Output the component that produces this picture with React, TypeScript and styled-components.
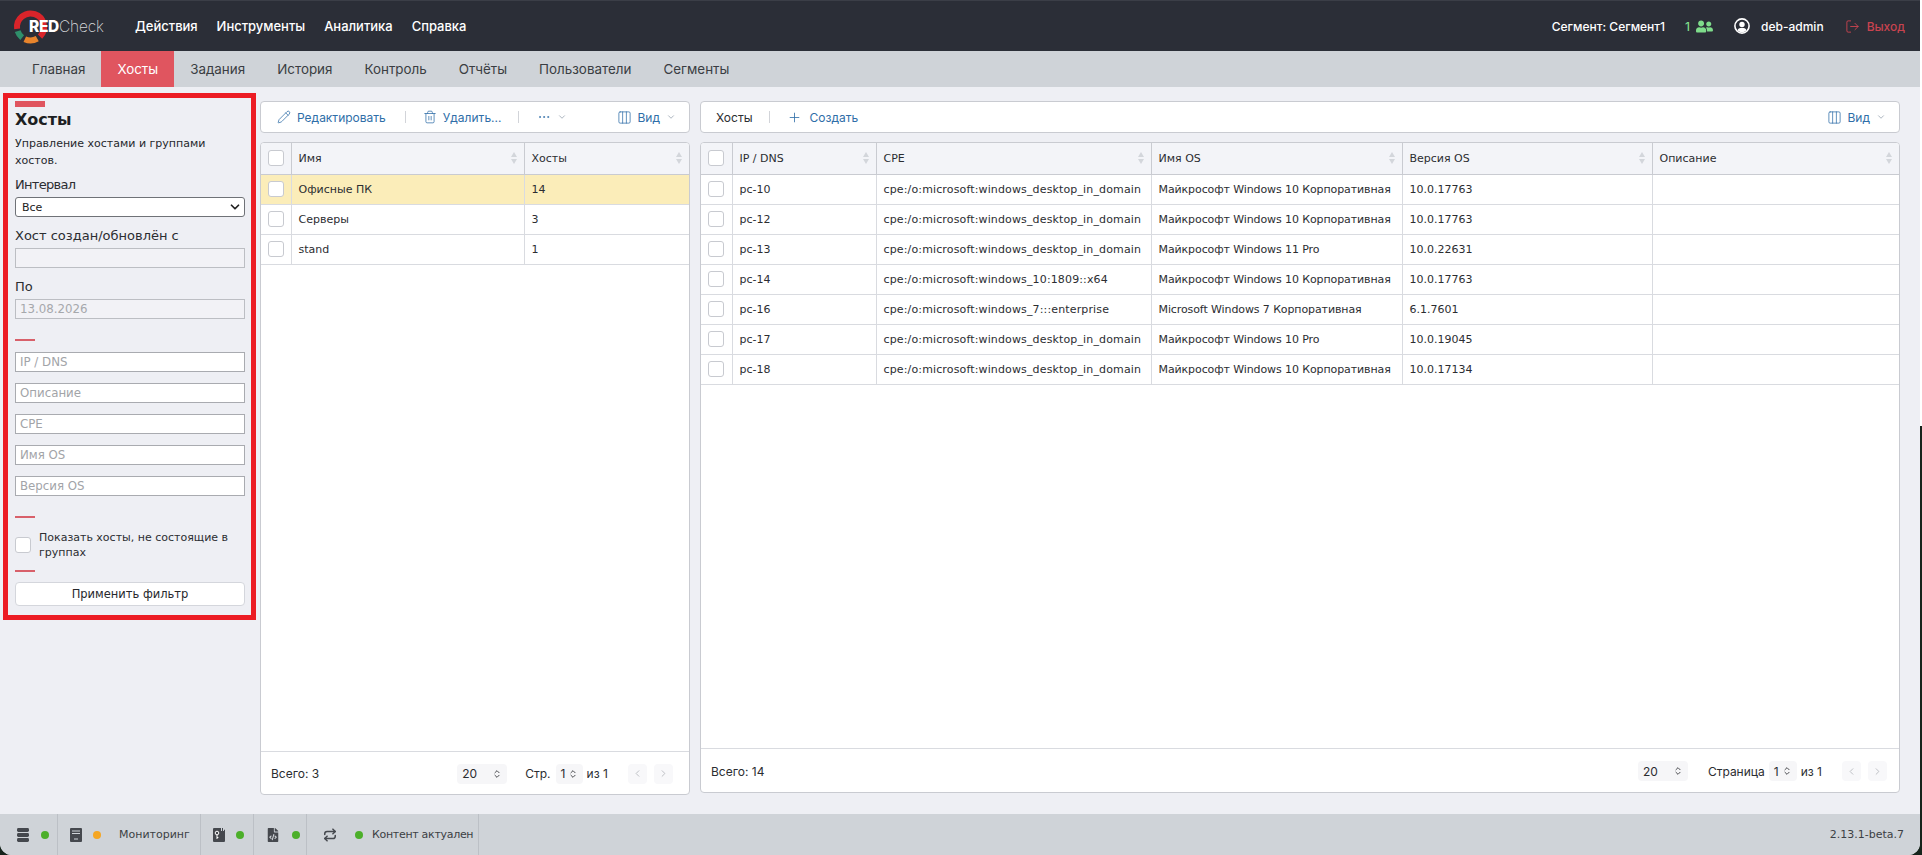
import React from "react";
import styled, { createGlobalStyle } from "styled-components";
import { Pencil, Trash2, Columns3, Plus, ChevronDown, ChevronsUpDown, ChevronLeft, ChevronRight, LogOut, Repeat, Ellipsis } from "lucide-react";
import { FaUserFriends, FaFileCode } from "react-icons/fa";

const ui = `Inter, "Liberation Sans", sans-serif`;
const verdana = `"DejaVu Sans", Verdana, sans-serif`;

const Global = createGlobalStyle`
  html, body { margin: 0; padding: 0; height: 100%; overflow: hidden; }
  html { background: linear-gradient(to bottom, #fff 426px, #16241c 426px); }
  body { background: transparent; }
  #root { height: 100%; }
  * { box-sizing: border-box; }
`;

const Page = styled.div`
  height: 855px; width: 1920px; display: flex; flex-direction: column;
  background: #eeeff4; border-radius: 0 0 12px 12px; overflow: hidden; color: #26282c;
`;
const Header = styled.header`
  height: 51px; flex: none; background: #2b2e37; display: flex; align-items: center;
  font-family: ${ui}; color: #fff; border-top: 1px solid #3b3e47;
`;
const Logo = styled.div`
  position: relative; width: 135px; height: 50px; flex: none; display: flex; align-items: center; padding-left: 29px;
  svg { position: absolute; left: 0; top: 0; }
`;
const LogoRed = styled.span`
  position: relative; font: 800 15.5px ${ui}; letter-spacing: -0.3px; color: #fff;
`;
const LogoCheck = styled.span`
  position: relative; font: 200 15.5px ${ui}; letter-spacing: -0.2px; color: #d7d8da;
`;
const Nav = styled.nav`display: flex; gap: 19px; font-size: 13px; font-weight: 500; letter-spacing: -0.02px;`;
const HeadRight = styled.div`
  margin-left: auto; display: flex; align-items: center; font-size: 12px; font-weight: 500; padding-right: 15px;
`;
const Segment = styled.span`margin-right: 20px;`;
const Online = styled.span`
  color: #7fdc8b; display: flex; align-items: center; gap: 6px; margin-right: 21px;
`;
const UserName = styled.span`
  display: flex; align-items: center; gap: 11px; margin-right: 21px;
`;
const Exit = styled.span`
  color: #c8434f; display: flex; align-items: center; gap: 7px;
`;
const Tabs = styled.div`
  height: 36px; flex: none; background: #cfd3d8; display: flex; padding-left: 16px;
  font-family: ${ui}; font-size: 13.4px;
`;
const Tab = styled.div<{ $active?: boolean }>`
  padding: 0 16px; display: flex; align-items: center;
  background: ${p => (p.$active ? "#e0555f" : "transparent")};
  color: ${p => (p.$active ? "#fff" : "#3a3d42")};
`;
const Main = styled.main`
  flex: 1; min-height: 0; display: flex; padding: 6px 20px 0 3px;
`;
const Side = styled.aside`
  width: 253px; height: 527px; flex: none; border: 5px solid #ec1c24; padding: 3px 6px 0 7px;
  margin-right: 4px; font-family: ${verdana}; color: #26282c; display: flex; flex-direction: column;
`;
const Bar = styled.div`width: 30px; height: 6px; background: #e0555f; flex: none;`;
const Title = styled.h1`margin: 4px 0 0; font: 700 16px/18px ${verdana}; color: #1d1f22;`;
const Desc = styled.p`margin: 6px 0 0; font-size: 11px; line-height: 17px;`;
const Label = styled.label<{ $top: number; $track?: number }>`
  display: block; font-size: 13px; line-height: 16px; margin-top: ${p => p.$top}px; margin-bottom: 4px; color: #2b2d31;
  letter-spacing: ${p => p.$track || 0}px;
`;
const SelectWrap = styled.div`
  position: relative; height: 20px;
  svg { position: absolute; right: 3px; top: 3px; pointer-events: none; }
`;
const Select = styled.select`
  appearance: none; width: 100%; height: 20px; background: #fff; border: 1px solid #6f7277; border-radius: 3px;
  padding: 0 6px; font: 11px ${verdana}; color: #222; display: block; outline: none;
`;
const Input = styled.input<{ $muted?: boolean }>`
  display: block; width: 100%; height: 20px; flex: none; border: 1px solid ${p => (p.$muted ? "#bcbec3" : "#a9abb0")}; padding: 0 4px;
  background: ${p => (p.$muted ? "#f2f2f6" : "#fff")}; font: 11.8px ${verdana}; color: #a6a8ac; outline: none;
  border-radius: 0;
  &::placeholder { color: #a2a4a8; opacity: 1; }
`;
const FilterInputs = styled.div`display: flex; flex-direction: column; gap: 11px;`;
const Rule = styled.div<{ $top: number; $bottom: number }>`
  width: 20px; height: 2px; background: #d8606a; flex: none;
  margin: ${p => p.$top}px 0 ${p => p.$bottom}px;
`;
const CheckRow = styled.label`
  display: flex; align-items: center; gap: 8px; font-size: 11px; line-height: 15px; color: #2b2d31;
`;
const Check = styled.span`
  width: 16px; height: 16px; flex: none; background: #fff; border: 1px solid #c8cad0; border-radius: 3px; display: block;
`;
const Apply = styled.button`
  height: 24px; flex: none; background: #fff; border: 1px solid #d4d6dc; border-radius: 4px; font: 11.5px ${verdana}; color: #26282c; padding: 0;
`;
const Pane = styled.section<{ $w?: number; $bottom: number; $left?: number }>`
  ${p => (p.$w ? `width: ${p.$w}px; flex: none;` : "flex: 1; min-width: 0;")}
  margin-left: ${p => p.$left || 0}px;
  display: flex; flex-direction: column; gap: 9px; padding-top: 8px; padding-bottom: ${p => p.$bottom}px;
`;
const Toolbar = styled.div<{ $left: number; $right: number }>`
  height: 32px; flex: none; background: #fff; border: 1px solid #c9cbd1; border-radius: 4px;
  display: flex; align-items: center; padding: 0 ${p => p.$right}px 0 ${p => p.$left}px;
  font-family: ${ui}; font-size: 12px; color: #2f6ea8;
`;
const ToolBtn = styled.span<{ $gap?: number }>`
  display: inline-flex; align-items: center; gap: ${p => p.$gap || 6}px; white-space: nowrap;
  svg { flex: none; }
`;
const ToolSep = styled.span<{ $l: number; $r: number }>`
  width: 1px; height: 12px; background: #d2d4d9; margin: 0 ${p => p.$r}px 0 ${p => p.$l}px; flex: none;
`;
const ToolPlain = styled.span`color: #2b2d31;`;
const Push = styled.span`margin-left: auto;`;
const Panel = styled.div`
  flex: 1; min-height: 0; background: #fff; border: 1px solid #c9cbd1; border-radius: 4px; display: flex; flex-direction: column; overflow: hidden;
`;
const TableArea = styled.div`flex: 1; min-height: 0;`;
const Table = styled.table`
  width: 100%; border-collapse: collapse; table-layout: fixed; font-family: ${verdana}; font-size: 11px; color: #2b2d31;
`;
const Th = styled.th`
  height: 31px; background: #f3f4f8; border-bottom: 1px solid #c9cbd1; border-right: 1px solid #c9cbd1;
  text-align: left; font-weight: 400; padding: 0 7px; position: relative;
  &:last-child { border-right: 0; }
`;
const Td = styled.td<{ $track?: number }>`
  height: 30px; border-bottom: 1px solid #d9dbe0; border-right: 1px solid #d9dbe0; padding: 0 7px; white-space: nowrap; overflow: hidden;
  letter-spacing: ${p => p.$track || 0}px;
  &:last-child { border-right: 0; }
`;
const Tr = styled.tr<{ $on?: boolean }>`background: ${p => (p.$on ? "#fbedb9" : "transparent")};`;
const BoxCell = styled.div`display: flex; justify-content: center;`;
const Sort = styled.span`
  position: absolute; right: 7px; top: 9px; display: flex; flex-direction: column; gap: 2px;
  &::before, &::after { content: ""; display: block; border-left: 3.5px solid transparent; border-right: 3.5px solid transparent; }
  &::before { border-bottom: 5px solid #d3d6db; }
  &::after { border-top: 5px solid #d3d6db; }
`;
const Footer = styled.div<{ $h: number }>`
  height: ${p => p.$h}px; flex: none; border-top: 1px solid #d9dbe0; display: flex; align-items: center;
  padding: 1px 12px 0 10px; font-family: ${ui}; font-size: 12px; color: #2b2d31;
`;
const Pick = styled.span<{ $w: number; $ml: number; $mr: number }>`
  width: ${p => p.$w}px; height: 20px; background: #f6f6f8; border-radius: 4px; display: inline-flex; align-items: center; justify-content: space-between;
  padding: 0 5px; margin: 0 ${p => p.$mr}px 0 ${p => p.$ml}px; flex: none;
`;
const PageBtn = styled.span<{ $ml: number }>`
  width: 19px; height: 20px; background: #f8f8fa; border-radius: 4px; display: inline-flex; align-items: center; justify-content: center;
  margin-left: ${p => p.$ml}px; color: #b9bbc0; flex: none;
`;
const Status = styled.footer`
  height: 41px; flex: none; background: #cfd3d8; display: flex; align-items: stretch;
  font: 11px ${verdana}; color: #3c3f44; white-space: nowrap;
`;
const Seg = styled.div<{ $w: number; $pad: number }>`
  width: ${p => p.$w}px; flex: none; border-right: 1px solid #bcc0c6; display: flex; align-items: center; padding-left: ${p => p.$pad}px; color: #3c3f44;
`;
const SegText = styled.span<{ $track?: number }>`letter-spacing: ${p => p.$track || 0}px;`;
const Dot = styled.span<{ $c?: string; $l: number; $r?: number }>`
  width: 8px; height: 8px; border-radius: 50%; background: ${p => p.$c || "#4caf2a"}; flex: none;
  margin: 0 ${p => p.$r || 0}px 0 ${p => p.$l}px;
`;
const Version = styled.span`margin-left: auto; align-self: center; padding-right: 16px;`;

const arc = (a: number, b: number) => {
  const cx = 30.5, cy = 26, r = 13.5;
  const pt = (d: number) => {
    const t = (d * Math.PI) / 180;
    return `${(cx + r * Math.sin(t)).toFixed(2)} ${(cy - r * Math.cos(t)).toFixed(2)}`;
  };
  const span = (b - a + 360) % 360;
  return `M${pt(a)}A${r} ${r} 0 ${span > 180 ? 1 : 0} 1 ${pt(b)}`;
};

const UserRing = () => (
  <svg width="16" height="16" viewBox="0 0 16 16" fill="none">
    <circle cx="8" cy="8" r="7.1" stroke="#fff" strokeWidth="1.6" />
    <circle cx="8" cy="6.4" r="2.7" fill="#fff" />
    <path d="M3.4 12.3c.9-1.8 2.6-2.5 4.6-2.5s3.700.7 4.600 2.500A6 6 0 0 1 8 14.200a6 6 0 0 1-4.600-1.900z" fill="#fff" />
  </svg>
);
const Stack = () => (
  <svg width="12" height="14" viewBox="0 0 12 14" fill="#45484e">
    <rect y="0" width="12" height="4" rx="1.4" />
    <rect y="5" width="12" height="4" rx="1.4" />
    <rect y="10" width="12" height="4" rx="1.4" />
  </svg>
);
const Monitor = () => (
  <svg width="12" height="14" viewBox="0 0 12 14">
    <path d="M1 0h10a1 1 0 0 1 1 1v12a1 1 0 0 1-1 1H1a1 1 0 0 1-1-1V1a1 1 0 0 1 1-1z" fill="#45484e" />
    <path d="M2 3h8M2 5.500h8M4 11h4" stroke="#cfd3d8" strokeWidth="1" />
  </svg>
);
const KeyFile = () => (
  <svg width="12" height="14" viewBox="0 0 12 14">
    <path d="M1 0h7v3h1V0h1v3h1V1.500L12 2v11a1 1 0 0 1-1 1H1a1 1 0 0 1-1-1V1a1 1 0 0 1 1-1z" fill="#45484e" />
    <circle cx="4" cy="5" r="1.800" fill="none" stroke="#fff" strokeWidth="1" />
    <path d="M4 6.800V11M4 9.500h1.400" stroke="#fff" strokeWidth="1" fill="none" />
  </svg>
);

const groups = [["Офисные ПК", "14"], ["Серверы", "3"], ["stand", "1"]];
const d = "cpe:/o:microsoft:windows_desktop_in_domain";
const m10 = "Майкрософт Windows 10 Корпоративная";
const hosts = [
  ["pc-10", d, m10, "10.0.17763"],
  ["pc-12", d, m10, "10.0.17763"],
  ["pc-13", d, "Майкрософт Windows 11 Pro", "10.0.22631"],
  ["pc-14", "cpe:/o:microsoft:windows_10:1809::x64", m10, "10.0.17763"],
  ["pc-16", "cpe:/o:microsoft:windows_7:::enterprise", "Microsoft Windows 7 Корпоративная", "6.1.7601"],
  ["pc-17", d, "Майкрософт Windows 10 Pro", "10.0.19045"],
  ["pc-18", d, m10, "10.0.17134"],
];

export default function App() {
  return (
    <Page>
      <Global />
      <Header>
        <Logo>
          <svg width="60" height="50" viewBox="0 0 60 50" fill="none">
            <path d={arc(262, 135)} stroke="#d9242a" strokeWidth="6" />
            <path d={arc(150, 205)} stroke="#e8842c" strokeWidth="6" />
            <path d={arc(218, 252)} stroke="#2f8f6b" strokeWidth="6" />
          </svg>
          <LogoRed>RED</LogoRed>
          <LogoCheck>Check</LogoCheck>
        </Logo>
        <Nav>
          <span>Действия</span>
          <span>Инструменты</span>
          <span>Аналитика</span>
          <span>Справка</span>
        </Nav>
        <HeadRight>
          <Segment>Сегмент: Сегмент1</Segment>
          <Online>1 <FaUserFriends size={17} /></Online>
          <UserName><UserRing />deb-admin</UserName>
          <Exit><LogOut size={15} strokeWidth={1.5} />Выход</Exit>
        </HeadRight>
      </Header>
      <Tabs>
        <Tab>Главная</Tab>
        <Tab $active>Хосты</Tab>
        <Tab>Задания</Tab>
        <Tab>История</Tab>
        <Tab>Контроль</Tab>
        <Tab>Отчёты</Tab>
        <Tab>Пользователи</Tab>
        <Tab>Сегменты</Tab>
      </Tabs>
      <Main>
        <Side>
          <Bar />
          <Title>Хосты</Title>
          <Desc>Управление хостами и группами хостов.</Desc>
          <Label $top={8} $track={-0.7}>Интервал</Label>
          <SelectWrap>
            <Select defaultValue="all"><option value="all">Все</option></Select>
            <ChevronDown size={14} strokeWidth={3} color="#222" />
          </SelectWrap>
          <Label $top={11}>Хост создан/обновлён с</Label>
          <Input $muted readOnly />
          <Label $top={11}>По</Label>
          <Input $muted readOnly value="13.08.2026" />
          <Rule $top={20} $bottom={11} />
          <FilterInputs>
            <Input placeholder="IP / DNS" />
            <Input placeholder="Описание" />
            <Input placeholder="CPE" />
            <Input placeholder="Имя OS" />
            <Input placeholder="Версия OS" />
          </FilterInputs>
          <Rule $top={20} $bottom={12} />
          <CheckRow><Check />Показать хосты, не состоящие в группах</CheckRow>
          <Rule $top={10} $bottom={10} />
          <Apply>Применить фильтр</Apply>
        </Side>
        <Pane $w={430} $bottom={19}>
          <Toolbar $left={16} $right={13}>
            <ToolBtn><Pencil size={14} strokeWidth={1.3} />Редактировать</ToolBtn>
            <ToolSep $l={19} $r={17} />
            <ToolBtn><Trash2 size={14} strokeWidth={1.3} />Удалить...</ToolBtn>
            <ToolSep $l={17} $r={18} />
            <ToolBtn><Ellipsis size={14} strokeWidth={1.3} /><ChevronDown size={10} strokeWidth={1.5} color="#7c8a9a" /></ToolBtn>
            <Push />
            <ToolBtn><Columns3 size={15} strokeWidth={1.2} />Вид<ChevronDown size={10} strokeWidth={1.5} color="#7c8a9a" /></ToolBtn>
          </Toolbar>
          <Panel>
            <TableArea>
              <Table>
                <colgroup><col width="30" /><col width="233" /><col /></colgroup>
                <thead>
                  <tr>
                    <Th><BoxCell><Check /></BoxCell></Th>
                    <Th>Имя<Sort /></Th>
                    <Th>Хосты<Sort /></Th>
                  </tr>
                </thead>
                <tbody>
                  {groups.map((g, i) => (
                    <Tr key={g[0]} $on={i === 0}>
                      <Td><BoxCell><Check /></BoxCell></Td>
                      <Td>{g[0]}</Td>
                      <Td>{g[1]}</Td>
                    </Tr>
                  ))}
                </tbody>
              </Table>
            </TableArea>
            <Footer $h={43}>
              <span>Всего: 3</span>
              <Pick $w={50} $ml={138} $mr={18}>20<ChevronsUpDown size={10} /></Pick>
              <span>Стр.</span>
              <Pick $w={27} $ml={5} $mr={4}>1<ChevronsUpDown size={10} /></Pick>
              <span>из 1</span>
              <PageBtn $ml={20}><ChevronLeft size={11} /></PageBtn>
              <PageBtn $ml={7}><ChevronRight size={11} /></PageBtn>
            </Footer>
          </Panel>
        </Pane>
        <Pane $bottom={21} $left={10}>
          <Toolbar $left={15} $right={13}>
            <ToolPlain>Хосты</ToolPlain>
            <ToolSep $l={16} $r={17} />
            <ToolBtn $gap={8}><Plus size={15} strokeWidth={1.3} />Создать</ToolBtn>
            <Push />
            <ToolBtn><Columns3 size={15} strokeWidth={1.2} />Вид<ChevronDown size={10} strokeWidth={1.5} color="#7c8a9a" /></ToolBtn>
          </Toolbar>
          <Panel>
            <TableArea>
              <Table>
                <colgroup><col width="31" /><col width="144" /><col width="275" /><col width="251" /><col width="250" /><col /></colgroup>
                <thead>
                  <tr>
                    <Th><BoxCell><Check /></BoxCell></Th>
                    <Th>IP / DNS<Sort /></Th>
                    <Th>CPE<Sort /></Th>
                    <Th>Имя OS<Sort /></Th>
                    <Th>Версия OS<Sort /></Th>
                    <Th>Описание<Sort /></Th>
                  </tr>
                </thead>
                <tbody>
                  {hosts.map(h => (
                    <Tr key={h[0]}>
                      <Td><BoxCell><Check /></BoxCell></Td>
                      <Td>{h[0]}</Td>
                      <Td $track={0.14}>{h[1]}</Td>
                      <Td $track={-0.1}>{h[2]}</Td>
                      <Td>{h[3]}</Td>
                      <Td />
                    </Tr>
                  ))}
                </tbody>
              </Table>
            </TableArea>
            <Footer $h={44}>
              <span>Всего: 14</span>
              <Push />
              <Pick $w={50} $ml={0} $mr={20}>20<ChevronsUpDown size={10} /></Pick>
              <span>Страница</span>
              <Pick $w={28} $ml={4} $mr={4}>1<ChevronsUpDown size={10} /></Pick>
              <span>из 1</span>
              <PageBtn $ml={20}><ChevronLeft size={11} /></PageBtn>
              <PageBtn $ml={7}><ChevronRight size={11} /></PageBtn>
            </Footer>
          </Panel>
        </Pane>
      </Main>
      <Status>
        <Seg $w={58} $pad={17}><Stack /><Dot $l={12} /></Seg>
        <Seg $w={143} $pad={12}><Monitor /><Dot $c="#f5a623" $l={11} $r={18} />Мониторинг</Seg>
        <Seg $w={53} $pad={12}><KeyFile /><Dot $l={11} /></Seg>
        <Seg $w={53} $pad={12}><FaFileCode size={14} color="#45484e" /><Dot $l={12} /></Seg>
        <Seg $w={172} $pad={16}><Repeat size={14} strokeWidth={2.6} color="#45484e" /><Dot $l={18} $r={9} /><SegText $track={-0.3}>Контент актуален</SegText></Seg>
        <Version>2.13.1-beta.7</Version>
      </Status>
    </Page>
  );
}
